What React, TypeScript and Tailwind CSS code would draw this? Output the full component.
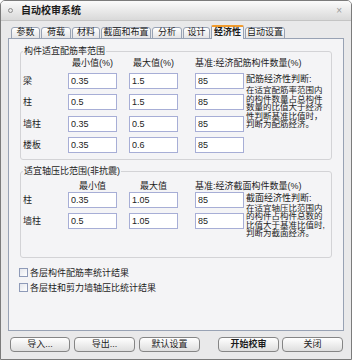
import React from "react";

const tabs = [
  { label: "参数", w: "w-[29px]" },
  { label: "荷载", w: "w-[30px]" },
  { label: "材料", w: "w-[28px]" },
  { label: "截面和布置", w: "w-[50px]" },
  { label: "分析", w: "w-[30px]" },
  { label: "设计", w: "w-[27px]" },
  { label: "经济性", w: "w-[33px]", active: true },
  { label: "自动设置", w: "w-[40px]" },
];

const rebarRows = [
  { label: "梁", min: "0.35", max: "1.5", base: "85" },
  { label: "柱", min: "0.5", max: "1.5", base: "85" },
  { label: "墙柱", min: "0.35", max: "0.5", base: "85" },
  { label: "楼板", min: "0.35", max: "0.6", base: "85" },
];

const axialRows = [
  { label: "柱", min: "0.35", max: "1.05", base: "85" },
  { label: "墙柱", min: "0.5", max: "1.05", base: "85" },
];

function Field({ value, className = "" }: { value: string; className?: string }) {
  return (
    <input
      defaultValue={value}
      className={`w-[49px] h-[16px] border border-[#a7aed6] bg-white px-[2px] text-[9px] text-[#222] outline-none ${className}`}
    />
  );
}

function Row({ label, min, max, base }: { label: string; min: string; max: string; base: string }) {
  return (
    <div className="flex items-center h-[16px]">
      <span className="w-[45px] text-[9px] leading-[16px]">{label}</span>
      <Field value={min} />
      <Field value={max} className="ml-[12px]" />
      <Field value={base} className="ml-[17px]" />
    </div>
  );
}

function Header({ min, max, base }: { min: string; max: string; base: string }) {
  return (
    <div className="flex h-[12px] text-[9px] leading-[12px] whitespace-nowrap">
      <span className="w-[45px]" />
      <span className="w-[49px] text-center">{min}</span>
      <span className="w-[49px] ml-[12px] text-center">{max}</span>
      <span className="ml-[17px]">{base}</span>
    </div>
  );
}

export default function App() {
  return (
    <div className="w-[352px] h-[360px] flex flex-col bg-[#e9e9ea] border border-[#7b7b7b] rounded-t-[5px] overflow-hidden text-[#1c1c1c] font-['Liberation_Sans','Noto_Sans_CJK_SC',sans-serif]">
      {/* title bar */}
      <div className="h-[20px] flex items-center bg-gradient-to-b from-[#fbfbfb] to-[#d9d9d9] border-b border-[#c4c4c4] pl-[7px] pr-[9px]">
        <span className="w-[5px] h-[5px] rounded-full border border-[#8a8a8a]" />
        <span className="ml-[8px] text-[10px] font-bold leading-[20px]">自动校审系统</span>
        <span className="ml-auto text-[10px] text-[#9a9a9a] leading-[20px]">×</span>
      </div>

      <div className="flex flex-col px-[7px]">
        {/* tabs */}
        <div className="flex items-end h-[17px] mt-[1px] pl-[3px] gap-[1px] -mb-px whitespace-nowrap">
          {tabs.map((t) =>
            t.active ? (
              <div
                key={t.label}
                className={`${t.w} relative z-10 h-[14px] flex items-center justify-center border-x border-[#98a2b4] border-t-2 border-t-[#f19b2c] bg-[#f4f4f6] rounded-t-[2px] text-[9px] font-bold`}
              >
                {t.label}
              </div>
            ) : (
              <div
                key={t.label}
                className={`${t.w} h-[12px] flex items-center justify-center border border-[#98a2b4] rounded-t-[3px] bg-gradient-to-b from-[#ffffff] to-[#e4e4e6] text-[9px]`}
              >
                {t.label}
              </div>
            )
          )}
        </div>

        {/* tab panel */}
        <div className="h-[293px] border border-[#98a2b4] bg-[#f4f4f6] px-[11px] pt-[7px] flex flex-col">
          <fieldset className="border border-[#d3d3d6] rounded-[3px] pb-[6px]">
            <legend className="ml-[2px] px-[1px] text-[9px] leading-[11px]">构件适宜配筋率范围</legend>
            <div className="pl-[2px]">
              <Header min="最小值(%)" max="最大值(%)" base="基准:经济配筋构件数量(%)" />
              <div className="flex mt-[4px]">
                <div className="flex flex-col gap-[5.3px]">
                  {rebarRows.map((r) => (
                    <Row key={r.label} {...r} />
                  ))}
                </div>
                <div className="ml-[2px] whitespace-nowrap">
                  <div className="text-[9px] leading-[13px]">配筋经济性判断:</div>
                  <div className="text-[8.5px] leading-[8.5px]">
                    在适宜配筋率范围内<br />
                    的构件数量占总构件<br />
                    数量的比值大于经济<br />
                    性判断基准比值时，<br />
                    判断为配筋经济。
                  </div>
                </div>
              </div>
            </div>
          </fieldset>

          <fieldset className="mt-[6px] border border-[#d3d3d6] rounded-[3px] pb-[19px]">
            <legend className="ml-[2px] px-[1px] text-[9px] leading-[11px]">适宜轴压比范围(非抗震)</legend>
            <div className="pl-[2px]">
              <div className="mt-[3px]">
                <Header min="最小值" max="最大值" base="基准:经济截面构件数量(%)" />
              </div>
              <div className="flex">
                <div className="flex flex-col gap-[5px]">
                  {axialRows.map((r) => (
                    <Row key={r.label} {...r} />
                  ))}
                </div>
                <div className="ml-[2px] whitespace-nowrap">
                  <div className="text-[9px] leading-[12px]">截面经济性判断:</div>
                  <div className="text-[8.5px] leading-[8.5px]">
                    在适宜轴压比范围内<br />
                    的构件占构件总数的<br />
                    比值大于基准比值时,<br />
                    判断为截面经济。
                  </div>
                </div>
              </div>
            </div>
          </fieldset>

          <div className="mt-[8px] flex flex-col gap-[1px] -ml-[1px]">
            {["各层构件配筋率统计结果", "各层柱和剪力墙轴压比统计结果"].map((s) => (
              <label key={s} className="flex items-center h-[14px]">
                <span className="w-[9px] h-[9px] border border-[#8e9ab8] bg-gradient-to-br from-[#e4e6ec] to-[#ffffff]" />
                <span className="ml-[2px] text-[9px] leading-[14px]">{s}</span>
              </label>
            ))}
          </div>
        </div>

        {/* buttons */}
        <div className="flex mt-[6px] ml-[2px] text-[9px]">
          {[
            { t: "导入...", c: "w-[60px]" },
            { t: "导出...", c: "w-[61px] ml-[4px]" },
            { t: "默认设置", c: "w-[61px] ml-[4px]" },
            { t: "开始校审", c: "w-[61px] ml-[18px] font-bold" },
            { t: "关闭", c: "w-[61px] ml-[3px]" },
          ].map((b) => (
            <button
              key={b.t}
              className={`${b.c} h-[15px] flex items-center justify-center border border-[#858585] rounded-[4px] bg-gradient-to-b from-[#ffffff] to-[#dedede] leading-[13px]`}
            >
              {b.t}
            </button>
          ))}
        </div>
      </div>
    </div>
  );
}
